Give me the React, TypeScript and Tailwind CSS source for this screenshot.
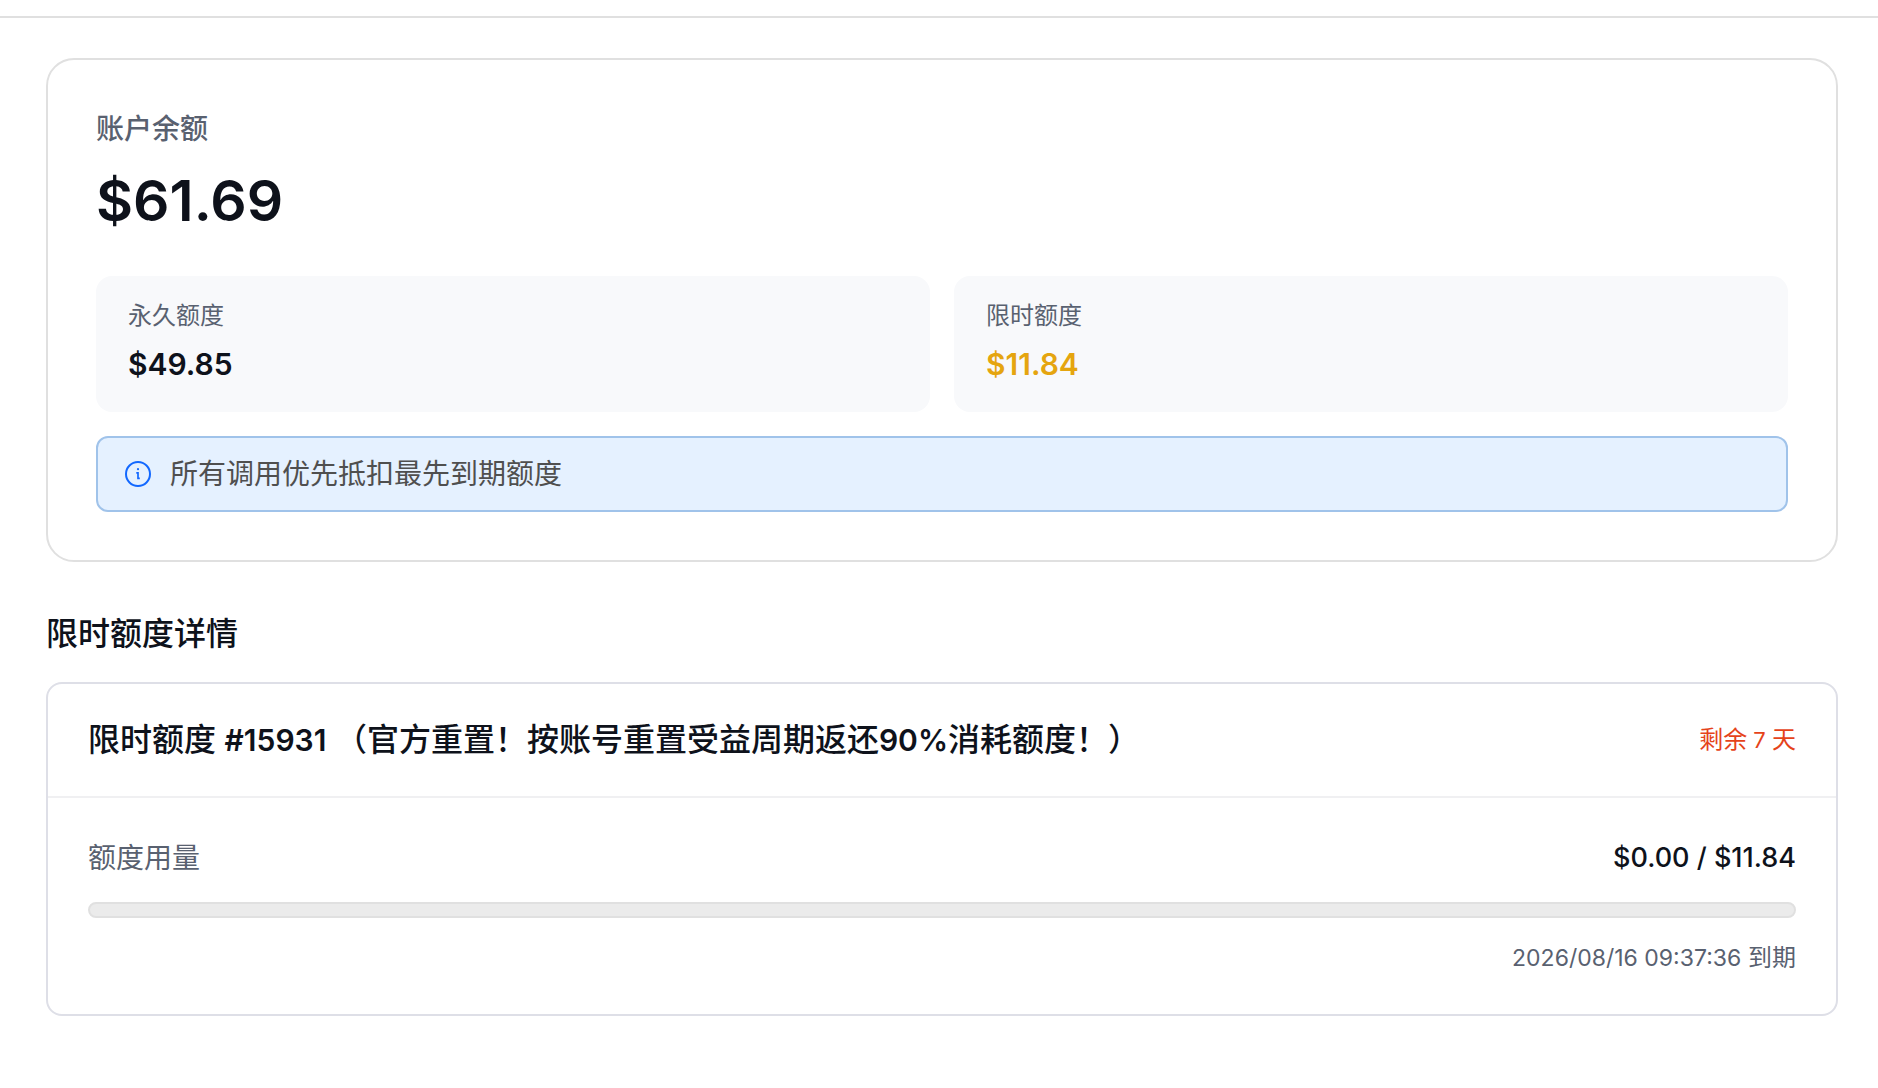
interface QuotaTileProps {
    label: string;
    value: string;
    valueClass: string;
}

function InfoIcon() {
    return (
        <svg viewBox="0 0 28 28" fill="none" aria-hidden="true" className="size-7 shrink-0 text-[#1268ff]">
            <circle cx="14" cy="14" r="12" stroke="currentColor" strokeWidth="2" />
            <circle cx="14" cy="9.2" r="1.1" fill="currentColor" />
            <path d="M12.3 12.9H14V18.4H15.8" stroke="currentColor" strokeWidth="1.7" />
        </svg>
    );
}

function QuotaTile({ label, value, valueClass }: QuotaTileProps) {
    return (
        <div className="flex flex-col gap-2 rounded-2xl bg-[#f8f9fb] px-8 py-6">
            <dt className="text-2xl leading-8 text-[#596170]">{label}</dt>
            <dd className={`text-[30px] leading-12 font-semibold ${valueClass}`}>{value}</dd>
        </div>
    );
}

export default function App() {
    return (
        <div className="min-h-screen bg-white pt-4 font-['Inter','Noto_Sans_CJK_SC',sans-serif] text-[#0e121b]">
            <header className="border-b-2 border-[#e0e0e0]" />
            <main className="pt-10 pr-10 pb-12 pl-[46px]">
                <section className="rounded-[28px] border-2 border-[#e0e0e0] p-12">
                    <h2 className="text-[28px] leading-[42px] font-medium text-[#596170]">账户余额</h2>
                    <p className="mt-2 text-[57px] leading-[86px] font-semibold">$61.69</p>
                    <dl className="mt-8 grid grid-cols-2 gap-6">
                        <QuotaTile label="永久额度" value="$49.85" valueClass="text-[#0e121b]" />
                        <QuotaTile label="限时额度" value="$11.84" valueClass="text-[#e5a50f]" />
                    </dl>
                    <div className="mt-6 flex items-center gap-[18px] rounded-xl border-2 border-[#a0c3ea] bg-[#e5f1ff] px-[26px] py-4">
                        <InfoIcon />
                        <p className="text-[28px] leading-10 text-[#4f4f4f]">所有调用优先抵扣最先到期额度</p>
                    </div>
                </section>
                <h2 className="mt-12 text-[32px] leading-12 font-medium">限时额度详情</h2>
                <section className="mt-6 rounded-2xl border-2 border-[#dedfe7]">
                    <div className="flex items-center justify-between border-b-2 border-[#f0f0f2] px-10 py-8">
                        <h3 className="text-[32px] leading-12 font-medium">
                            限时额度 <span className="text-[30px] font-semibold">#15931</span> （官方重置！按账号重置受益周期返还
                            <span className="text-[30px] font-semibold">90%</span>消耗额度！）
                        </h3>
                        <span className="text-2xl text-[#e5431a]">
                            剩余<span className="text-[22px]"> 7 </span>天
                        </span>
                    </div>
                    <div className="p-10">
                        <div className="flex items-center justify-between text-[28px] leading-10">
                            <span id="usage-label" className="text-[#596170]">额度用量</span>
                            <span className="text-[27px] font-medium">$0.00 / $11.84</span>
                        </div>
                        <div
                            role="progressbar"
                            aria-labelledby="usage-label"
                            aria-valuenow={0}
                            aria-valuemin={0}
                            aria-valuemax={100}
                            className="mt-6 h-4 rounded-full border-2 border-[#e0e0e0] bg-[#ebebeb]"
                        />
                        <p className="mt-6 text-right text-2xl leading-8 text-[#596170]">
                            <time className="text-[23px]">2026/08/16 09:37:36</time> 到期
                        </p>
                    </div>
                </section>
            </main>
        </div>
    );
}
